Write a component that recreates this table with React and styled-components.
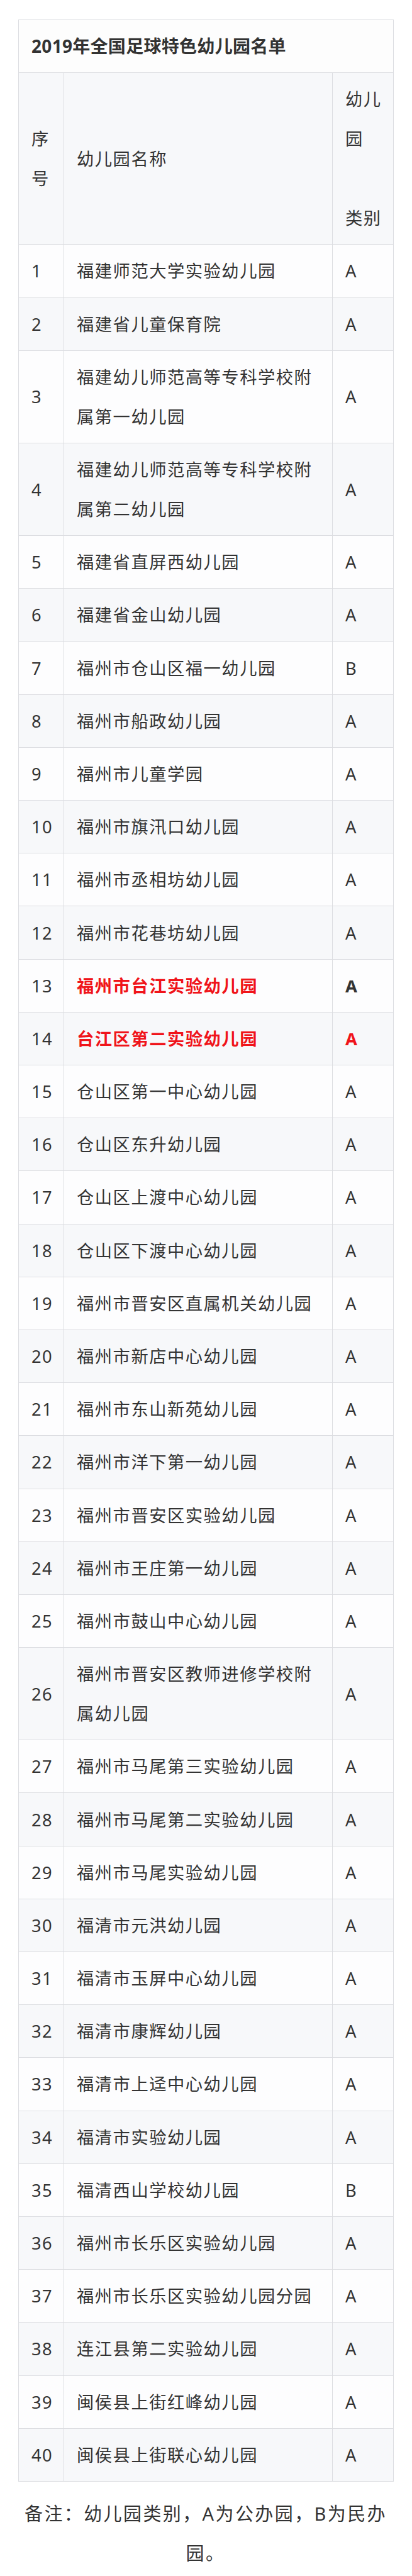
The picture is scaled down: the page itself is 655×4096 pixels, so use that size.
import React from 'react'
import styled, { createGlobalStyle } from 'styled-components'

const GlobalStyle = createGlobalStyle`
    body {
        margin: 0;
        background: #ffffff;
        font-family: "Noto Sans", "Noto Sans CJK SC", sans-serif;
        color: #333333;
    }
`

const Page = styled.div`
    width: 655px;
    padding: 31px 0 0 29px;
    box-sizing: border-box;
`

const Table = styled.table`
    width: 596px;
    table-layout: fixed;
    border-collapse: collapse;
    border: 1px solid #dcdde1;
`

const TitleCell = styled.th`
    padding: 10.1px 20px;
    line-height: 63px;
    font-size: 28px;
    font-weight: 700;
    letter-spacing: 0.3px;
    text-align: left;
    color: #333333;
    background: #fdfdfd;
    border: 1px solid #dcdde1;
`

const Row = styled.tr`
    background: ${props => (props.$shade ? '#f7f8fa' : '#fdfdfe')};
`

const Cell = styled.td`
    padding: 10.1px ${props => (props.$tight ? '4px' : '20px')} 10.1px 20px;
    line-height: 63px;
    font-size: 27.3px;
    letter-spacing: 1.5px;
    vertical-align: middle;
    text-align: left;
    white-space: ${props => (props.$nowrap ? 'nowrap' : 'normal')};
    font-weight: ${props => (props.$bold ? 700 : 400)};
    color: ${props => (props.$red ? '#f0141a' : '#333333')};
    border: 1px solid #dcdde1;
    word-break: break-all;
`

const Note = styled.p`
    width: 596px;
    margin: 19px 0 0 0;
    line-height: 63.6px;
    font-size: 29px;
    letter-spacing: 2.4px;
    text-align: center;
    color: #333333;
`

const schools = [
    ['福建师范大学实验幼儿园', 'A'],
    ['福建省儿童保育院', 'A'],
    ['福建幼儿师范高等专科学校附属第一幼儿园', 'A'],
    ['福建幼儿师范高等专科学校附属第二幼儿园', 'A'],
    ['福建省直屏西幼儿园', 'A'],
    ['福建省金山幼儿园', 'A'],
    ['福州市仓山区福一幼儿园', 'B'],
    ['福州市船政幼儿园', 'A'],
    ['福州市儿童学园', 'A'],
    ['福州市旗汛口幼儿园', 'A'],
    ['福州市丞相坊幼儿园', 'A'],
    ['福州市花巷坊幼儿园', 'A'],
    ['福州市台江实验幼儿园', 'A', 'name'],
    ['台江区第二实验幼儿园', 'A', 'both'],
    ['仓山区第一中心幼儿园', 'A'],
    ['仓山区东升幼儿园', 'A'],
    ['仓山区上渡中心幼儿园', 'A'],
    ['仓山区下渡中心幼儿园', 'A'],
    ['福州市晋安区直属机关幼儿园', 'A'],
    ['福州市新店中心幼儿园', 'A'],
    ['福州市东山新苑幼儿园', 'A'],
    ['福州市洋下第一幼儿园', 'A'],
    ['福州市晋安区实验幼儿园', 'A'],
    ['福州市王庄第一幼儿园', 'A'],
    ['福州市鼓山中心幼儿园', 'A'],
    ['福州市晋安区教师进修学校附属幼儿园', 'A'],
    ['福州市马尾第三实验幼儿园', 'A'],
    ['福州市马尾第二实验幼儿园', 'A'],
    ['福州市马尾实验幼儿园', 'A'],
    ['福清市元洪幼儿园', 'A'],
    ['福清市玉屏中心幼儿园', 'A'],
    ['福清市康辉幼儿园', 'A'],
    ['福清市上迳中心幼儿园', 'A'],
    ['福清市实验幼儿园', 'A'],
    ['福清西山学校幼儿园', 'B'],
    ['福州市长乐区实验幼儿园', 'A'],
    ['福州市长乐区实验幼儿园分园', 'A'],
    ['连江县第二实验幼儿园', 'A'],
    ['闽侯县上街红峰幼儿园', 'A'],
    ['闽侯县上街联心幼儿园', 'A'],
]

function App() {
    const rowElements = schools.map(([name, type, mark], i) => {
        const highlighted = !!mark
        return (
            <Row key={i} $shade={i % 2 === 1}>
                <Cell $tight $nowrap>{i + 1}</Cell>
                <Cell $red={highlighted} $bold={highlighted}>{name}</Cell>
                <Cell $tight $nowrap $red={mark === 'both'} $bold={highlighted}>{type}</Cell>
            </Row>
        )
    })

    return (
        <Page>
            <GlobalStyle />
            <Table>
                <colgroup>
                    <col style={{ width: '72px' }} />
                    <col style={{ width: '427px' }} />
                    <col style={{ width: '97px' }} />
                </colgroup>
                <thead>
                    <tr>
                        <TitleCell colSpan={3}>2019年全国足球特色幼儿园名单</TitleCell>
                    </tr>
                </thead>
                <tbody>
                    <Row $shade>
                        <Cell $tight $nowrap>序<br />号</Cell>
                        <Cell>幼儿园名称</Cell>
                        <Cell $tight $nowrap>幼儿<br />园<br /><br />类别</Cell>
                    </Row>
                    {rowElements}
                </tbody>
            </Table>
            <Note>备注：幼儿园类别，A为公办园，B为民办园。</Note>
        </Page>
    )
}

export default App
